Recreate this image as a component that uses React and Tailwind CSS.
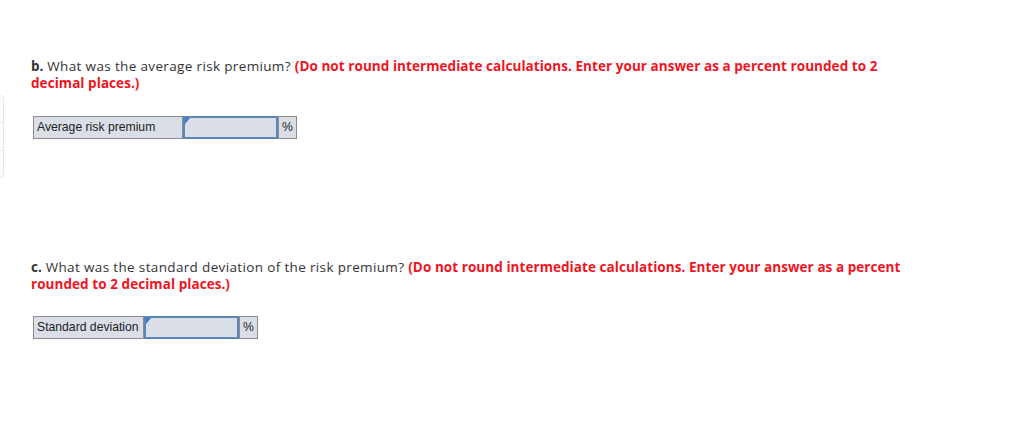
import React from "react";

function AnswerRow({ label, labelW }) {
  return (
    <div className="flex h-[23px] w-max border border-[#8c8c8c] bg-[#dadee6] text-[12.2px] text-[#222] [font-family:'Liberation_Sans',Arial,sans-serif]">
      <div className="flex items-center whitespace-nowrap overflow-hidden pl-[3px] border-r border-[#8c8c8c]" style={{ width: labelW }}>
        {label}
      </div>
      <div className="relative w-[95px] border-2 border-[#5b86b8] -my-px">
        <div className="absolute left-0 top-0 w-0 h-0 border-t-[6px] border-r-[5px] border-t-[#3d7cc9] border-r-transparent" />
      </div>
      <div className="flex items-center justify-center w-[18px] border-l border-[#8c8c8c]">%</div>
    </div>
  );
}

export default function App() {
  return (
    <div className="relative w-[1024px] h-[440px] bg-white overflow-hidden text-[#333] [font-family:'Open_Sans',Lato,sans-serif]">
      <div className="absolute left-[-6px] top-[95px] w-[10px] h-[83px] rounded-r-[4px] border border-[#e6e6e6] flex flex-col">
        <div className="h-[27px] border-b border-[#e6e6e6]" />
        <div className="h-[28px] border-b border-[#e6e6e6]" />
      </div>
      <div className="pl-[31px] pt-[58px] w-[915px]">
        <p className="text-[13.5px] leading-[17px] tracking-[0.35px]">
          <b className="tracking-normal">b.</b> What was the average risk premium?{" "}
          <b className="text-[#f0141e] tracking-[0.06px]">
            (Do not round intermediate calculations. Enter your answer as a percent rounded to 2 decimal places.)
          </b>
        </p>
        <div className="mt-[24px] ml-[2px]">
          <AnswerRow label="Average risk premium" labelW="149px" />
        </div>
        <p className="mt-[120px] text-[13.5px] leading-[17px] tracking-[0.35px]">
          <b className="tracking-normal">c.</b> What was the standard deviation of the risk premium?{" "}
          <b className="text-[#f0141e] tracking-[0.06px]">
            (Do not round intermediate calculations. Enter your answer as a percent rounded to 2 decimal places.)
          </b>
        </p>
        <div className="mt-[23px] ml-[2px]">
          <AnswerRow label="Standard deviation" labelW="110px" />
        </div>
      </div>
    </div>
  );
}
